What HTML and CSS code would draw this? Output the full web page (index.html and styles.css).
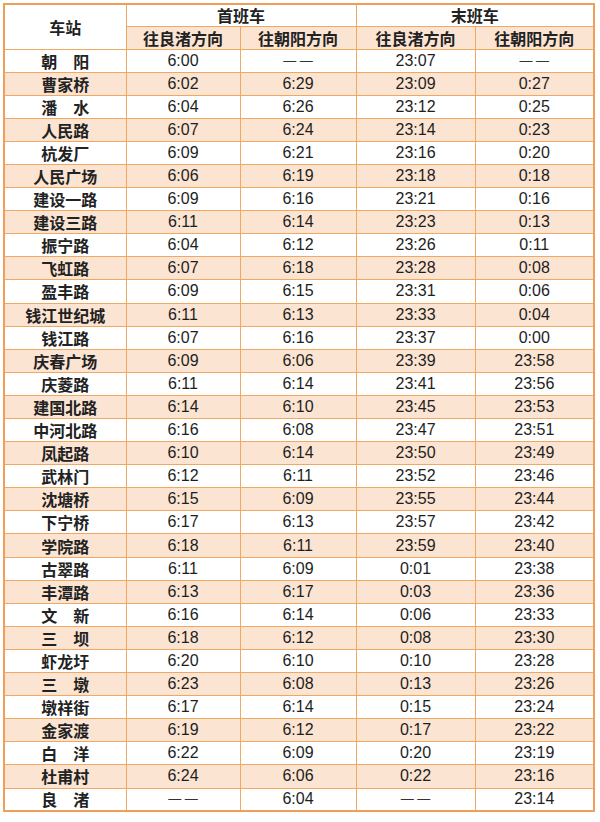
FILE: index.html
```html
<!DOCTYPE html>
<html lang="zh-CN">
<head>
<meta charset="utf-8">
<title>首末班车时刻表</title>
<link rel="stylesheet" href="styles.css">
</head>
<body>
<table class="timetable">
  <colgroup>
    <col class="c-station"><col class="c-a"><col class="c-b"><col class="c-c"><col class="c-d">
  </colgroup>
  <thead>
    <tr class="h1">
      <th rowspan="2" class="station-head">车站</th>
      <th colspan="2">首班车</th>
      <th colspan="2">末班车</th>
    </tr>
    <tr class="h2">
      <th>往良渚方向</th><th>往朝阳方向</th><th>往良渚方向</th><th>往朝阳方向</th>
    </tr>
  </thead>
  <tbody>
    <tr><td class="st">朝　阳</td><td>6:00</td><td class="dash">— —</td><td>23:07</td><td class="dash">— —</td></tr>
    <tr><td class="st">曹家桥</td><td>6:02</td><td>6:29</td><td>23:09</td><td>0:27</td></tr>
    <tr><td class="st">潘　水</td><td>6:04</td><td>6:26</td><td>23:12</td><td>0:25</td></tr>
    <tr><td class="st">人民路</td><td>6:07</td><td>6:24</td><td>23:14</td><td>0:23</td></tr>
    <tr><td class="st">杭发厂</td><td>6:09</td><td>6:21</td><td>23:16</td><td>0:20</td></tr>
    <tr><td class="st">人民广场</td><td>6:06</td><td>6:19</td><td>23:18</td><td>0:18</td></tr>
    <tr><td class="st">建设一路</td><td>6:09</td><td>6:16</td><td>23:21</td><td>0:16</td></tr>
    <tr><td class="st">建设三路</td><td>6:11</td><td>6:14</td><td>23:23</td><td>0:13</td></tr>
    <tr><td class="st">振宁路</td><td>6:04</td><td>6:12</td><td>23:26</td><td>0:11</td></tr>
    <tr><td class="st">飞虹路</td><td>6:07</td><td>6:18</td><td>23:28</td><td>0:08</td></tr>
    <tr><td class="st">盈丰路</td><td>6:09</td><td>6:15</td><td>23:31</td><td>0:06</td></tr>
    <tr><td class="st">钱江世纪城</td><td>6:11</td><td>6:13</td><td>23:33</td><td>0:04</td></tr>
    <tr><td class="st">钱江路</td><td>6:07</td><td>6:16</td><td>23:37</td><td>0:00</td></tr>
    <tr><td class="st">庆春广场</td><td>6:09</td><td>6:06</td><td>23:39</td><td>23:58</td></tr>
    <tr><td class="st">庆菱路</td><td>6:11</td><td>6:14</td><td>23:41</td><td>23:56</td></tr>
    <tr><td class="st">建国北路</td><td>6:14</td><td>6:10</td><td>23:45</td><td>23:53</td></tr>
    <tr><td class="st">中河北路</td><td>6:16</td><td>6:08</td><td>23:47</td><td>23:51</td></tr>
    <tr><td class="st">凤起路</td><td>6:10</td><td>6:14</td><td>23:50</td><td>23:49</td></tr>
    <tr><td class="st">武林门</td><td>6:12</td><td>6:11</td><td>23:52</td><td>23:46</td></tr>
    <tr><td class="st">沈塘桥</td><td>6:15</td><td>6:09</td><td>23:55</td><td>23:44</td></tr>
    <tr><td class="st">下宁桥</td><td>6:17</td><td>6:13</td><td>23:57</td><td>23:42</td></tr>
    <tr><td class="st">学院路</td><td>6:18</td><td>6:11</td><td>23:59</td><td>23:40</td></tr>
    <tr><td class="st">古翠路</td><td>6:11</td><td>6:09</td><td>0:01</td><td>23:38</td></tr>
    <tr><td class="st">丰潭路</td><td>6:13</td><td>6:17</td><td>0:03</td><td>23:36</td></tr>
    <tr><td class="st">文　新</td><td>6:16</td><td>6:14</td><td>0:06</td><td>23:33</td></tr>
    <tr><td class="st">三　坝</td><td>6:18</td><td>6:12</td><td>0:08</td><td>23:30</td></tr>
    <tr><td class="st">虾龙圩</td><td>6:20</td><td>6:10</td><td>0:10</td><td>23:28</td></tr>
    <tr><td class="st">三　墩</td><td>6:23</td><td>6:08</td><td>0:13</td><td>23:26</td></tr>
    <tr><td class="st">墩祥街</td><td>6:17</td><td>6:14</td><td>0:15</td><td>23:24</td></tr>
    <tr><td class="st">金家渡</td><td>6:19</td><td>6:12</td><td>0:17</td><td>23:22</td></tr>
    <tr><td class="st">白　洋</td><td>6:22</td><td>6:09</td><td>0:20</td><td>23:19</td></tr>
    <tr><td class="st">杜甫村</td><td>6:24</td><td>6:06</td><td>0:22</td><td>23:16</td></tr>
    <tr><td class="st">良　渚</td><td class="dash">— —</td><td>6:04</td><td class="dash">— —</td><td>23:14</td></tr>
  </tbody>
</table>
</body>
</html>
```

FILE: styles.css
```css
html {
  background: #ffffff;
}
body {
  margin: 0;
  padding: 3px 0 0 3px;
  color: #1e1e1e;
  font-family: "Liberation Sans", "Noto Sans CJK SC", sans-serif;
}
.timetable {
  border-collapse: collapse;
  width: 590px;
  table-layout: fixed;
  border: 2px solid #eea05a;
  font-size: 16px;
}
.c-station { width: 122px; }
.c-a { width: 114px; }
.c-b { width: 116px; }
.c-c { width: 119px; }
.c-d { width: 119px; }

.timetable th,
.timetable td {
  border: 1px solid #f0a862;
  padding: 0;
  text-align: center;
  line-height: 16px;
}
.timetable th {
  font-family: "Noto Sans CJK SC", sans-serif;
  font-weight: 700;
  color: #222;
}
.h1 th { height: 20.5px; background: #ffffff; }
.h2 th { height: 22px; background: #fce4d2; }
.station-head { background: #ffffff; }

.timetable tbody tr { height: 23.1px; }
.timetable tbody tr:nth-child(even) td { background: #fce4d2; }
.timetable td {
  color: #1e1e1e;
}
.timetable td.st {
  font-family: "Noto Sans CJK SC", sans-serif;
  font-weight: 700;
  color: #222;
}
.timetable td.dash {
  font-size: 13px;
  color: #333;
}
```
